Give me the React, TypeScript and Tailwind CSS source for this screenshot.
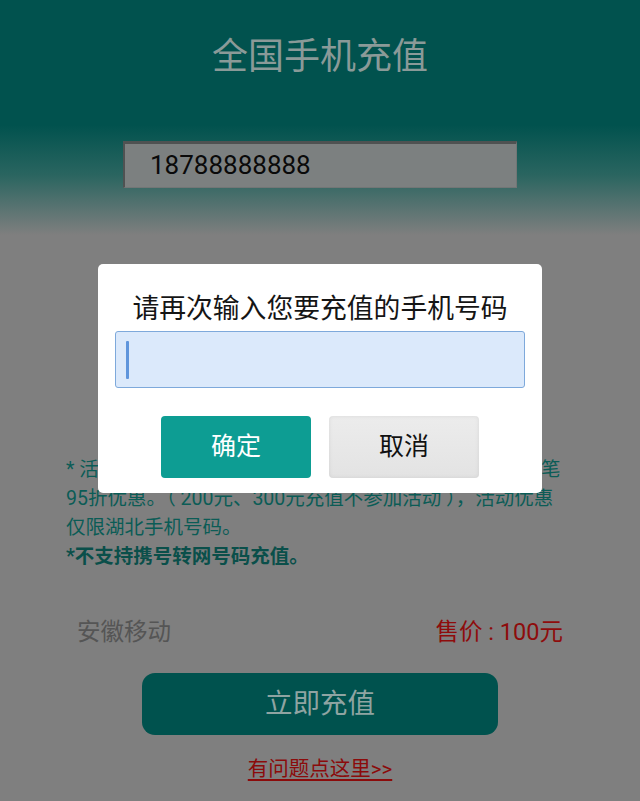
import React from "react";

export default function App() {
  const font = { fontFamily: "Roboto, 'Noto Sans CJK SC', 'Noto Sans', sans-serif" };
  return (
    <div
      style={font}
      className="relative w-[640px] h-[801px] overflow-hidden bg-[linear-gradient(to_bottom,#01524e_0px,#01524e_125px,#2a6560_175px,#7f7f7f_235px,#7f7f7f_100%)]"
    >
      {/* Page content (dimmed) */}
      <div className="flex flex-col items-center">
        <div className="pt-[34px] text-[36px] leading-[46px] text-[#8a9a98]">全国手机充值</div>
        <div className="mt-[61px] w-[394px] h-[47px] flex items-center pl-[25px] bg-[#7c8080] border-t-[3px] border-l-2 border-[#4f5252] border-r border-b border-r-[#727676] border-b-[#727676] text-[26px] text-[#0a0a0a]">
          18788888888
        </div>
        <div className="mt-[267px] w-full pl-[66px] text-[19.5px] leading-[29px] text-[#0b5c56] whitespace-pre">
          <div>* 活动期间，湖北移动用户每月首次充值100元可享受首笔</div>
          <div>95折优惠。（ 200元、300元充值不参加活动 ），活动优惠</div>
          <div>仅限湖北手机号码。</div>
          <div className="font-bold text-[#0a4f4a]">*不支持携号转网号码充值。</div>
        </div>
        <div className="mt-[45px] w-full flex justify-between items-center pl-[77px] pr-[77px] text-[23.5px] leading-[32px]">
          <span className="text-[#555555]">安徽移动</span>
          <span className="text-[#8e0c0c]">售价 : 100元</span>
        </div>
        <div className="mt-[25px] w-[356px] h-[62px] rounded-[13px] bg-[#00524e] flex items-center justify-center text-[27.5px] text-[#8fa4a2]">
          立即充值
        </div>
        <div className="mt-[21px] text-[20.5px] leading-[26px] text-[#8b0b0b] underline underline-offset-[3px]">
          有问题点这里&gt;&gt;
        </div>
      </div>

      {/* Dialog */}
      <div className="absolute left-[98px] top-[264px] w-[444px] h-[229px] bg-white rounded-[5px] flex flex-col items-center pt-[27px]">
        <div className="text-[26.8px] leading-[36px] text-[#151515]">请再次输入您要充值的手机号码</div>
        <div className="mt-[4px] w-[410px] h-[57px] bg-[#dbe9fb] border border-[#7ea9db] rounded-[3px] flex items-center pl-[10px]">
          <div className="w-[3px] h-[38px] bg-[#5f95dc] rounded-[1px]" />
        </div>
        <div className="mt-[28px] flex gap-[18px]">
          <div className="w-[150px] h-[62px] rounded-[4px] bg-[#0d9d93] flex items-center justify-center text-[25px] text-white">
            确定
          </div>
          <div className="w-[150px] h-[62px] rounded-[4px] bg-[linear-gradient(to_bottom,#ececec,#e3e3e3)] shadow-[inset_0_0_4px_rgba(0,0,0,0.08)] flex items-center justify-center text-[25px] text-[#111111]">
            取消
          </div>
        </div>
      </div>
    </div>
  );
}
